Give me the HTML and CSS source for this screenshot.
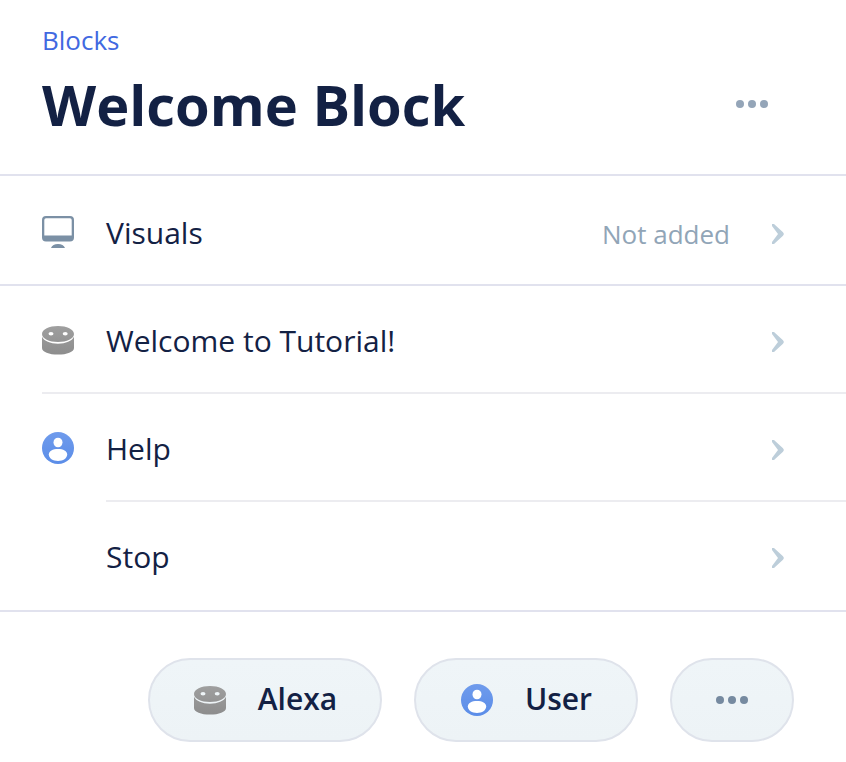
FILE: index.html
```html
<!DOCTYPE html>
<html lang="en">
<head>
<meta charset="utf-8">
<title>Welcome Block</title>
<link rel="stylesheet" href="styles.css">
</head>
<body>
<svg width="0" height="0" class="defs">
  <defs>
    <linearGradient id="gray" gradientUnits="userSpaceOnUse" x1="0" y1="0" x2="0" y2="32"><stop stop-color="#a0a0a0"/><stop offset="1" stop-color="#8c8c8c"/></linearGradient>
    <linearGradient id="blue" x2="0" y2="1"><stop stop-color="#6f9bec"/><stop offset="1" stop-color="#5b8de8"/></linearGradient>
  </defs>
  <symbol id="monitor" viewBox="0 0 32 32"><path fill="#7b90a5" fill-rule="evenodd" d="M4 0h24a4 4 0 0 1 4 4v17.500a4 4 0 0 1-4 4H4a4 4 0 0 1-4-4V4a4 4 0 0 1 4-4zM4 2.300A1.700 1.700 0 0 0 2.300 4v15.500h27.400V4A1.700 1.700 0 0 0 28 2.300zM9 32c1-2.600 3.500-4 7-4s6 1.400 7 4z"/></symbol>
  <symbol id="alexa" viewBox="0 0 32 32"><path fill="url(#gray)" fill-rule="evenodd" d="M16 2c8.800 0 16 3.400 16 8s-7.200 8-16 8S0 14.600 0 10s7.200-8 16-8zM9 8a2.500 1.800 0 1 0 .01 3.600A2.500 1.800 0 0 0 9 8zm14.200 0a2.500 1.800 0 1 0 .01 3.600A2.500 1.800 0 0 0 23.200 8zM0 12.800c2 4.300 8.200 6.900 16 6.900s14-2.600 16-6.900V24c0 4-7.200 6.600-16 6.600S0 28 0 24z"/></symbol>
  <symbol id="user" viewBox="0 0 32 32"><circle cx="16" cy="16" r="16" fill="url(#blue)"/><ellipse cx="16" cy="10.500" rx="4.500" ry="4.800" fill="#fff"/><path fill="#fff" d="M6.800 22.500c0-3.500 4-5.500 9.200-5.500s9.200 2 9.200 5.500c0 3.700-4.200 6.500-9.200 6.500s-9.200-2.800-9.200-6.500z"/></symbol>
  <symbol id="dots" viewBox="0 0 32 8"><circle cx="4" cy="4" r="4"/><circle cx="16" cy="4" r="4"/><circle cx="28" cy="4" r="4"/></symbol>
  <symbol id="chevron" viewBox="0 0 14 22"><path d="M1 1h2l9 8.300a2.300 2.300 0 0 1 0 3.400L3 21H1v-2l6-8L1 3z" fill="#bdceda"/></symbol>
</svg>
<header class="header">
  <div><a class="crumb">Blocks</a><h1>Welcome Block</h1></div>
  <svg class="dots"><use href="#dots"/></svg>
</header>
<main>
  <div class="row visuals"><svg class="icon"><use href="#monitor"/></svg><span class="label">Visuals</span><span class="status">Not added</span><svg class="chevron"><use href="#chevron"/></svg></div>
  <div class="row line"><svg class="icon"><use href="#alexa"/></svg><span class="label">Welcome to Tutorial!</span><svg class="chevron"><use href="#chevron"/></svg></div>
  <div class="row line inset"><svg class="icon"><use href="#user"/></svg><span class="label">Help</span><svg class="chevron"><use href="#chevron"/></svg></div>
  <div class="row last"><span class="icon"></span><span class="label">Stop</span><svg class="chevron"><use href="#chevron"/></svg></div>
</main>
<footer class="actions">
  <button class="alexa"><svg class="icon"><use href="#alexa"/></svg><span>Alexa</span></button>
  <button class="user"><svg class="icon"><use href="#user"/></svg><span>User</span></button>
  <button class="more"><svg class="dots"><use href="#dots"/></svg></button>
</footer>
</body>
</html>
```
FILE: styles.css
```css
* { box-sizing: border-box; }
body { margin: 0; background: #fff; color: #132144; font-family: "Open Sans", sans-serif; overflow: hidden; }
svg { display: block; flex: none; }
.defs { position: absolute; }
.header { height: 176px; border-bottom: 2px solid #e1e2ee; padding: 23px 78px 0 42px; display: flex; justify-content: space-between; }
.crumb { display: block; font-size: 26px; line-height: 34px; color: #4169e1; }
h1 { margin: 9px 0 0; font-size: 56px; line-height: 76px; font-weight: 700; }
.dots { width: 32px; height: 8px; fill: #94a5b8; }
.header .dots { margin-top: 77px; }
.row { height: 108px; padding: 4px 61px 0 42px; display: flex; align-items: center; }
.row .icon { margin-bottom: 2px; }
.visuals { height: 110px; padding-top: 6px; border-bottom: 2px solid #e1e2ee; }
.icon { width: 32px; height: 32px; flex: none; }
.label { margin-left: 32px; flex: 1; font-size: 30px; line-height: 40px; }
.status { font-size: 26px; line-height: 36px; padding-top: 2px; color: #91a5b7; margin-right: 41px; }
.chevron { width: 14px; height: 22px; }
.row .chevron { margin-top: 1px; }
.line { border-bottom: 2px solid #ececf0; margin-left: 42px; padding-left: 0; }
.inset { margin-left: 106px; }
.inset .icon { margin-left: -64px; }
.last { height: 110px; border-bottom: 2px solid #e1e2ee; padding-top: 2px; }
.actions { display: flex; gap: 32px; padding: 46px 0 0 148px; }
button { height: 84px; border: 2px solid #dfe3eb; border-radius: 42px; background: linear-gradient(#eff5f8, #edf3f6); padding: 0; color: inherit; font: 600 30px/40px "Open Sans", sans-serif; display: flex; align-items: center; justify-content: center; gap: 32px; }
button span { padding-bottom: 2px; }
.alexa { width: 234px; padding-left: 1px; }
.user { width: 224px; padding-left: 1px; }
.more { width: 124px; }
.more .dots { fill: #768aa0; }
```
